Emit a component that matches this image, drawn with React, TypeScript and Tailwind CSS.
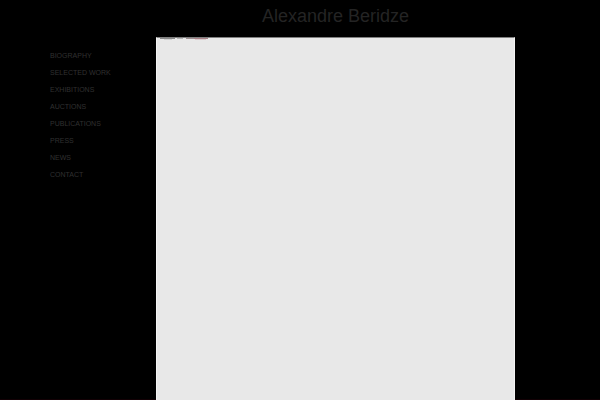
import React from 'react';

const links = [
  { label: 'Biography', href: '#biography' },
  { label: 'Selected Work', href: '#selected-work' },
  { label: 'Exhibitions', href: '#exhibitions' },
  { label: 'Auctions', href: '#auctions' },
  { label: 'Publications', href: '#publications' },
  { label: 'Press', href: '#press' },
  { label: 'News', href: '#news' },
  { label: 'Contact', href: '#contact' },
];

function Sidebar() {
  return (
    <nav className="w-[26%] shrink-0 pt-[50px] pl-[50px] border-b border-[#120004]">
      <ul>
        {links.map((link) => (
          <li key={link.href} className="h-[17px] leading-[12px]">
            <a href={link.href} className="block text-[7px] whitespace-nowrap uppercase text-[#303030] hover:text-white">
              {link.label}
            </a>
          </li>
        ))}
      </ul>
    </nav>
  );
}

function App() {
  return (
    <div className="flex min-h-screen bg-black font-['Liberation_Sans',sans-serif]">
      <Sidebar />
      <div className="flex flex-1 flex-col">
        <header className="pt-1 pb-[9px] text-center">
          <h1 className="text-[18px] leading-[24px] text-[#242424]">Alexandre Beridze</h1>
        </header>
        <main className="flex-1 bg-[#e8e8e8] border border-b-0 border-t-[#808080] border-x-[#f4f4f4]">
          {/* bottom edge of the slide */}
          <svg className="block h-[2px] w-[52px]" viewBox="0 0 52 2" aria-hidden="true">
            <rect x="3" width="15" height="1" fill="#888" />
            <rect x="20" width="6" height="1" fill="#b4b4b4" />
            <rect x="29" width="8" height="1" fill="#9d8f91" />
            <rect x="37" width="14" height="1" fill="#a68086" />
            <rect x="7" y="1" width="8" height="1" fill="#d0d0d0" />
            <rect x="38" y="1" width="11" height="1" fill="#d9cbcd" />
          </svg>
        </main>
      </div>
      <div className="w-[85px] shrink-0 border-b border-[#120004]" />
    </div>
  );
}

export default App;
